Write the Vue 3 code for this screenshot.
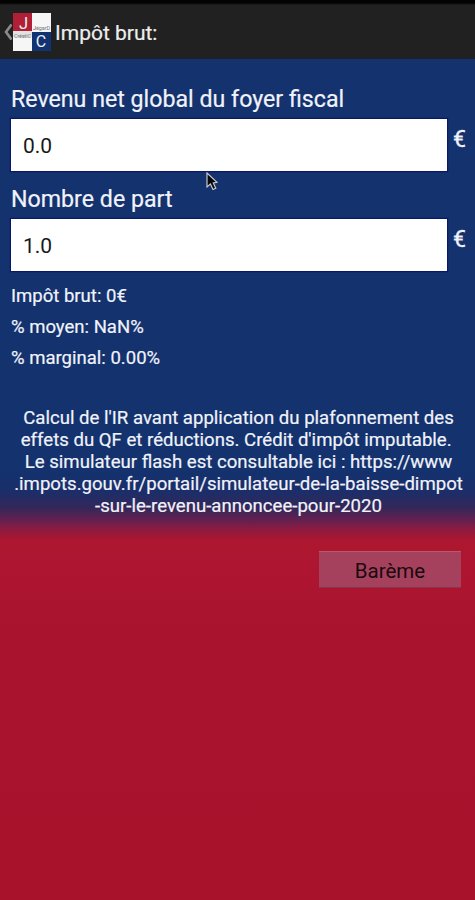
<script setup>
import { ref } from 'vue'

const fields = ref([
  { id: 'revenu', label: 'Revenu net global du foyer fiscal', value: '0.0' },
  { id: 'part', label: 'Nombre de part', value: '1.0' },
])
const results = ['Impôt brut: 0€', '% moyen: NaN%', '% marginal: 0.00%']
const noteLines = [
  "Calcul de l'IR avant application du plafonnement des",
  "effets du QF et réductions. Crédit d'impôt imputable. ",
  'Le simulateur flash est consultable ici : https://www',
  '.impots.gouv.fr/portail/simulateur-de-la-baisse-dimpot',
  '-sur-le-revenu-annoncee-pour-2020',
]
</script>

<template>
  <div class="screen">
    <header class="bar">
      <svg class="back" width="9" height="20" viewBox="0 0 9 20">
        <path d="M8.5 2.5 L3 10 L8.5 17.5" fill="none" stroke="#8c8c8c" stroke-width="2.6" />
      </svg>
      <svg class="logo" width="38" height="38" viewBox="0 0 38 38">
        <rect width="38" height="38" fill="#f6f6f6" />
        <rect width="19" height="18" fill="#b01f35" />
        <rect x="19" y="19" width="19" height="19" fill="#123372" />
        <rect y="18" width="19" height="6" fill="#e2e2e2" />
        <text x="10.5" y="15.5" class="logo-letter" font-size="16.5" text-anchor="middle">J</text>
        <text x="28" y="34" class="logo-letter" font-size="16" text-anchor="middle">C</text>
        <text x="20" y="16.5" class="logo-word" font-size="5.5" textLength="17"><tspan fill="#b01f35">J</tspan>égarD</text>
        <text x="1" y="24.5" class="logo-word" font-size="5.5" textLength="17">CréatiC</text>
      </svg>
      <h1 class="title">Impôt brut:</h1>
    </header>

    <main class="content">
      <section v-for="field in fields" :key="field.id" class="field">
        <label class="label" :for="field.id">{{ field.label }}</label>
        <div class="row">
          <input :id="field.id" v-model="field.value" class="input" type="text" />
          <span class="unit">€</span>
        </div>
      </section>

      <div class="results">
        <p v-for="line in results" :key="line" class="result">{{ line }}</p>
      </div>

      <div class="note">
        <p v-for="line in noteLines" :key="line" class="note-line">{{ line }}</p>
      </div>

      <button class="action" type="button">Barème</button>
    </main>

    <svg class="pointer" width="12" height="20" viewBox="0 0 12 20">
      <path d="M1 1 V15 L4.4 12 L7 17.5 L9.8 16.2 L7.3 10.9 L11 10.3 Z" fill="#080808" stroke="#c8c8d0" stroke-width="1.2" />
    </svg>
  </div>
</template>

<style>
body {
  background: #a9132d;
}
</style>

<style scoped>
.screen {
  position: relative;
  box-sizing: border-box;
  height: 900px;
  overflow: hidden;
  font-family: Roboto, "Liberation Sans", sans-serif;
  color: #f1f2fa;
  background: linear-gradient(
    to bottom,
    #13326e 0,
    #13326e 470px,
    #1c2e69 492px,
    #342759 508px,
    #64204f 520px,
    #931a3d 531px,
    #ae172f 541px,
    #ad1531 565px,
    #a9132d 650px,
    #a8122b 900px
  );
}

.bar {
  display: flex;
  align-items: center;
  box-sizing: border-box;
  height: 59px;
  padding: 4px 0 0 3px;
  background: linear-gradient(to bottom, #030303 0, #030303 3px, #212121 5px, #212121 57px, #1b2030 59px);
}

.back {
  flex: none;
}

.logo {
  flex: none;
  margin-left: 1px;
}

.logo-letter {
  font-family: Roboto, sans-serif;
  fill: #eeeef4;
}

.logo-word {
  font-family: Roboto, sans-serif;
  fill: #777;
}

.title {
  margin: 2px 0 0 4px;
  font-size: 21px;
  font-weight: 400;
  line-height: 28px;
  color: #eee;
  -webkit-text-stroke: 0.2px;
}

.content {
  display: flex;
  flex-direction: column;
  padding: 27px 11px 0;
}

.field {
  display: flex;
  flex-direction: column;
  height: 100px;
}

.label {
  height: 33px;
  font-size: 23.2px;
  line-height: 26px;
  -webkit-text-stroke: 0.2px;
}

.row {
  display: flex;
  gap: 6px;
}

.input {
  flex: none;
  box-sizing: border-box;
  width: 436px;
  height: 52px;
  padding: 2px 12px 0;
  border: 0;
  border-radius: 0;
  background: #fff;
  box-shadow: 0 0 1px 1px #091766;
  font: 400 21px Roboto, "Liberation Sans", sans-serif;
  color: #181818;
  outline: none;
}

.unit {
  padding-top: 7px;
  font-size: 23px;
  line-height: 28px;
  -webkit-text-stroke: 0.3px;
}

.results {
  display: flex;
  flex-direction: column;
  gap: 9px;
  margin-top: -1px;
}

.result {
  margin: 0;
  font-size: 18.55px;
  line-height: 22px;
  -webkit-text-stroke: 0.2px;
}

.note {
  margin: 38px -12px 0 -10px;
  text-align: center;
}

.note-line {
  margin: 0;
  font-size: 18.6px;
  line-height: 22px;
  white-space: pre;
  -webkit-text-stroke: 0.2px;
}

.action {
  align-self: flex-end;
  width: 142px;
  height: 37px;
  margin: 34px 3px 0 0;
  padding: 2px 0 0;
  border: 0;
  border-top: 1px solid #b95770;
  border-bottom: 1px solid #88354d;
  background: #a5415d;
  font: 400 20.5px Roboto, "Liberation Sans", sans-serif;
  color: #1b090f;
}

.pointer {
  position: absolute;
  top: 172px;
  left: 206px;
}
</style>
